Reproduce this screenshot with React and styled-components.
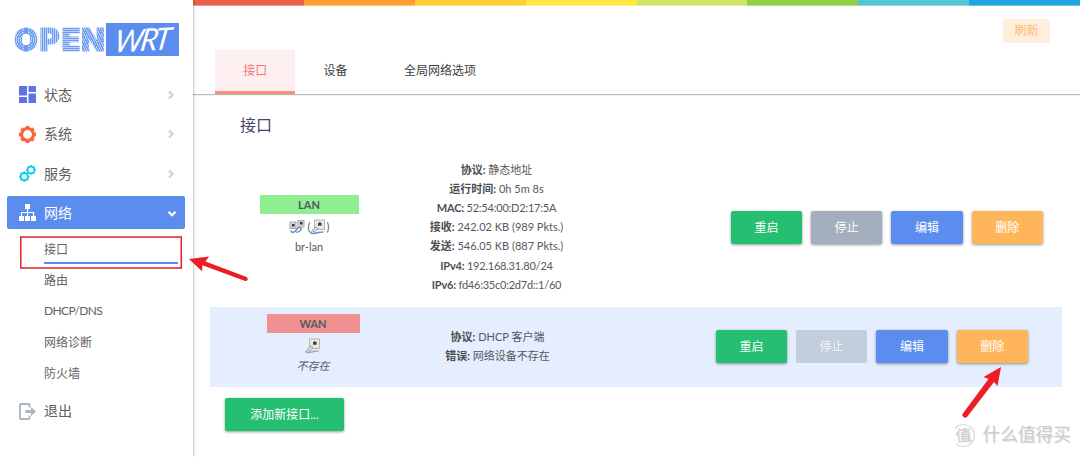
import styled, { createGlobalStyle } from "styled-components";

const GlobalStyle = createGlobalStyle`
  * {
    box-sizing: border-box;
  }

  body {
    margin: 0;
    background: #fff;
    color: #55595e;
    font-family: Lato, "Noto Sans CJK SC", sans-serif;
    overflow: hidden;
  }
`;

const Page = styled.div`
  position: relative;
  display: flex;
  width: 1080px;
  height: 457px;
  overflow: hidden;
`;

const Sidebar = styled.aside`
  display: flex;
  flex-direction: column;
  width: 193px;
  flex-shrink: 0;
  padding: 23px 8px 0 7px;
  z-index: 1;
  box-shadow: 0 0 3px rgba(0, 0, 0, 0.4);
`;

const Logo = styled.div`
  display: flex;
  align-items: center;
  height: 32px;
  margin: 0 0 20px 7px;
`;

const LogoLetter = styled.span`
  width: ${(p) => p.$width}px;
  height: 32px;
  font-family: Inter, sans-serif;
  font-size: 31px;
  line-height: 33px;
  font-weight: 900;
  letter-spacing: -1px;
  color: transparent;
  -webkit-text-stroke: 1px transparent;
  background: ${(p) => p.$fill};
  background-clip: text;
  -webkit-background-clip: text;
`;

const LogoBox = styled.div`
  display: flex;
  justify-content: center;
  width: 73px;
  height: 33px;
  margin-left: auto;
  margin-right: 6px;
  background: #5b8def;
  color: #fff;
  font-family: Lato, sans-serif;
  font-style: italic;
  font-size: 31px;
  line-height: 32px;
  letter-spacing: -2.5px;

  span {
    transform: skewX(-12deg) rotate(-3deg) scaleX(0.95);
  }
`;

const MenuItem = styled.a`
  display: flex;
  align-items: center;
  height: ${(p) => (p.$active ? 33 : 39.5)}px;
  margin-top: ${(p) => (p.$active ? 2.5 : 0)}px;
  padding: 0 8px 0 12px;
  width: 178px;
  border-radius: 2px;
  font-size: 14px;
  color: ${(p) => (p.$active ? "#fff" : "#5a5e63")};
  background: ${(p) => (p.$active ? "#5b8def" : "transparent")};

  .label {
    flex: 1;
    margin-left: 8px;
    padding-bottom: 2px;
  }
`;

const SubMenu = styled.ul`
  list-style: none;
  margin: 5px 0 2.5px;
  padding: 0 0 0 37px;
  font-size: 12px;
  color: #5f6368;
`;

const SubItem = styled.li`
  display: flex;
  align-items: center;
  width: 134px;
  height: 31px;
  letter-spacing: ${(p) => p.$spacing || 0}px;
  border-bottom: 2px solid ${(p) => (p.$active ? "#5b8def" : "transparent")};

  &:first-child {
    height: 30px;
    margin-bottom: 1px;
  }
`;

const Main = styled.main`
  flex: 1;
  display: flex;
  flex-direction: column;
`;

const Rainbow = styled.div`
  display: flex;
  height: 6px;
  flex-shrink: 0;
`;

const Stripe = styled.i`
  flex: 1;
  background: ${(p) => p.$color};
  box-shadow: inset 0 -1px rgba(255, 255, 255, 0.35);
`;

const Header = styled.div`
  display: flex;
  justify-content: flex-end;
  height: 44px;
  padding: 13px 30px 0 0;
`;

const Refresh = styled.span`
  width: 47px;
  height: 24px;
  border-radius: 3px;
  background: #ffeedb;
  color: #ffb976;
  font-size: 12px;
  line-height: 23px;
  text-align: center;
`;

const Tabs = styled.nav`
  display: flex;
  height: 44px;
  padding-left: 22px;
  box-shadow: 0 1px 1px rgba(0, 0, 0, 0.28);
  clip-path: inset(0 0 -4px 0);
`;

const Tab = styled.a`
  height: 44px;
  padding: 0 28.2px;
  font-size: 12px;
  line-height: 42px;
  color: ${(p) => (p.$active ? "#f5777c" : "#404040")};
  background: ${(p) => (p.$active ? "#fdefef" : "transparent")};
  border-bottom: 3px solid ${(p) => (p.$active ? "#fb9080" : "transparent")};
`;

const Title = styled.h3`
  margin: 18px 0 0 47px;
  font-size: 16px;
  line-height: 26px;
  font-weight: 400;
  color: #45456e;
`;

const Row = styled.section`
  display: flex;
  align-items: flex-start;
  width: 852px;
  height: ${(p) => p.$height}px;
  margin-left: 17px;
  padding-left: ${(p) => p.$left}px;
  padding-right: ${(p) => p.$right}px;
  background: ${(p) => (p.$tinted ? "#e5eefe" : "transparent")};
`;

const Zone = styled.div`
  width: ${(p) => p.$width}px;
  margin-top: ${(p) => p.$top}px;
  text-align: center;
  font-size: 11px;

  .name {
    height: 19px;
    line-height: 20px;
    font-weight: 700;
    background: ${(p) => p.$color};
  }

  .ports {
    display: flex;
    justify-content: center;
    align-items: center;
    height: 25px;
  }

  .device {
    line-height: 16px;
    font-style: ${(p) => (p.$missing ? "italic" : "normal")};
  }
`;

const Details = styled.div`
  width: 190px;
  margin-left: 43px;
  margin-top: ${(p) => p.$top}px;
  text-align: center;
  font-size: 11px;
  line-height: 19.2px;
  white-space: nowrap;

  b {
    color: #4b4f54;
  }
`;

const DetailLine = styled.div`
  letter-spacing: ${(p) => (p.$tight ? -0.22 : 0)}px;
`;

const Actions = styled.div`
  display: flex;
  gap: 9px;
  margin-left: auto;
  margin-top: ${(p) => p.$top}px;
`;

const Button = styled.button`
  width: ${(p) => p.$width || 71.3}px;
  height: 33px;
  border: 0;
  padding: 0 0 2px;
  border-radius: 2px;
  font-family: inherit;
  font-size: 12px;
  color: #fff;
  background: ${(p) => p.$color};
  opacity: ${(p) => (p.disabled ? 0.5 : 1)};
  box-shadow: ${(p) => (p.disabled ? "none" : "0 1px 3px rgba(0, 0, 0, 0.4)")};
`;

const Footer = styled.div`
  padding: 11px 0 0 32px;
`;

const Overlay = styled.svg`
  position: absolute;
  inset: 0;
  z-index: 2;
`;

const Watermark = styled.div`
  position: absolute;
  right: 9px;
  bottom: 10px;
  display: flex;
  align-items: center;
  gap: 8px;
  font-size: 17.7px;
  line-height: 24px;
  color: #ccc;
  text-shadow: 1px 1px 1px #e4e4e4;

  .badge {
    width: 23px;
    height: 23px;
    border: 1.5px solid #d4d4d4;
    border-left-color: transparent;
    border-radius: 50%;
    font-size: 16px;
    line-height: 19px;
    text-align: center;
    transform: rotate(-6deg);
  }
`;

const stripes = (angle) =>
  `repeating-linear-gradient(${angle}deg, #6d9af1 0 1.2px, #bdd2fa 1.2px 2px)`;

const logoLetters = [
  {
    char: "O",
    width: 25.5,
    fill: "repeating-radial-gradient(circle at 12px 16.5px, #6d9af1 0 1.2px, #bdd2fa 1.2px 2px)",
  },
  { char: "P", width: 22, fill: stripes(90) },
  { char: "E", width: 19.5, fill: stripes(0) },
  { char: "N", width: 24, fill: stripes(65) },
];

const rainbow = [
  "#e7604a",
  "#ff9f33",
  "#ffcf3b",
  "#ffe83f",
  "#cfe46a",
  "#8fd149",
  "#55c4d3",
  "#1ea5df",
];

const subItems = [
  { label: "接口", active: true },
  { label: "路由" },
  { label: "DHCP/DNS", spacing: -0.62 },
  { label: "网络诊断" },
  { label: "防火墙" },
];

const DashboardIcon = () => (
  <svg width="17" height="17" viewBox="0 0 17 17" fill="#5e72e4">
    <path d="M0 0h8v9.500H0zM0 11h8v6H0zM9.500 0H17v6H9.500zM9.500 7.500H17V17H9.500z" />
  </svg>
);

const gearTeeth = [0, 45, 90, 135, 180, 225, 270, 315];

const Gear = ({ cx, cy, scale, color }) => (
  <g transform={`translate(${cx} ${cy}) scale(${scale})`}>
    <circle r="5.900" fill="none" stroke={color} strokeWidth="3" />
    {gearTeeth.map((a) => (
      <rect
        key={a}
        x="-1.800"
        y="-8.500"
        width="3.600"
        height="2.800"
        fill={color}
        transform={`rotate(${a})`}
      />
    ))}
  </g>
);

const SystemIcon = () => (
  <svg width="17" height="17" viewBox="0 0 17 17">
    <Gear cx={8.5} cy={8.5} scale={1} color="#fb6340" />
  </svg>
);

const ServicesIcon = () => (
  <svg width="17" height="17" viewBox="0 0 17 17">
    <Gear cx={5.3} cy={11.6} scale={0.61} color="#11cdef" />
    <Gear cx={12} cy={4.9} scale={0.57} color="#11cdef" />
  </svg>
);

const NetworkIcon = () => (
  <svg width="17" height="17" viewBox="0 0 17 17" fill="#fff">
    <path d="M6 0h5v5H6zM0 12h5v5H0zM6 12h5v5H6zM12 12h5v5h-5z" />
    <path d="M8.500 5v7M2.500 12V8.500h12V12" fill="none" stroke="#fff" strokeWidth="1.200" />
  </svg>
);

const LogoutIcon = () => (
  <svg width="17" height="17" viewBox="0 0 17 17">
    <path
      d="M10.500 4.500V1.800Q10.500 1 9.700 1H1.800Q1 1 1 1.800v13.400q0 .8.8.8h7.900q.8 0 .8-.8v-2.700"
      fill="none"
      stroke="#adb5bd"
      strokeWidth="1.800"
    />
    <path d="M6.500 7H12V4l5 4.500-5 4.500v-3H6.500z" fill="#adb5bd" />
  </svg>
);

const Chevron = ({ open }) => (
  <svg width="10" height="10" viewBox="0 0 10 10">
    <path
      d={open ? "M1.500 3.800L5 7.200l3.500-3.400" : "M2 1.500L5.500 5 2 8.500"}
      fill="none"
      stroke={open ? "#fff" : "#ced4da"}
      strokeWidth="2.300"
    />
  </svg>
);

// network socket with the blue cable in front of it
const PortIcon = ({ down }) => (
  <svg width="16" height="16" viewBox="0 0 16 16">
    <rect x="4.500" y="1" width="10" height="9.500" fill="#e9e9e4" stroke="#b7b7b2" />
    <path d="M8 4h1V3.200h1.600V4h1v2.700H8z" fill="#444" />
    <path d="M2 11.500l4-3.500 2 1.500-3.500 3.500z" fill="#ddd" stroke="#8e8e8e" strokeWidth=".8" />
    <path
      d="M2 12.500q-2 2 1 2c3 0 5-1.500 10.500-1.500"
      fill="none"
      stroke={down ? "#a5a9ae" : "#6f92cc"}
      strokeWidth="1.700"
    />
  </svg>
);

const BridgeIcon = () => (
  <svg width="16" height="16" viewBox="0 0 16 16">
    <rect x="1" y="3" width="6" height="6.500" fill="#d8d8d3" stroke="#aaa" />
    <rect x="9" y="1.500" width="6" height="6.500" fill="#d8d8d3" stroke="#aaa" />
    <path d="M3 5h2.500v2.500H3zM11 3h2.500v2.500H11z" fill="#333" />
    <path
      d="M2 11.500q0 2.500 3 1.500c3-1 2-5 5.500-4.500 3.500.5 1 4-3 5"
      fill="none"
      stroke="#6f8fc4"
      strokeWidth="1.600"
    />
  </svg>
);

const RowActions = ({ top, stopDisabled }) => (
  <Actions $top={top}>
    <Button $color="#24bf70">重启</Button>
    <Button $color="#a3afbe" disabled={stopDisabled}>
      停止
    </Button>
    <Button $color="#5b8def">编辑</Button>
    <Button $color="#ffb65a">删除</Button>
  </Actions>
);

const lanDetails = [
  ["协议", "静态地址"],
  ["运行时间", "0h 5m 8s"],
  ["MAC", "52:54:00:D2:17:5A", true],
  ["接收", "242.02 KB (989 Pkts.)"],
  ["发送", "546.05 KB (887 Pkts.)"],
  ["IPv4", "192.168.31.80/24", true],
  ["IPv6", "fd46:35c0:2d7d::1/60", true],
];

const wanDetails = [
  ["协议", "DHCP 客户端"],
  ["错误", "网络设备不存在"],
];

const DetailList = ({ items, top }) => (
  <Details $top={top}>
    {items.map(([key, value, tight]) => (
      <DetailLine key={key} $tight={tight}>
        <b>{key}:</b> {value}
      </DetailLine>
    ))}
  </Details>
);

export default function App() {
  return (
    <>
      <GlobalStyle />
      <Page>
        <Sidebar>
          <Logo>
            {logoLetters.map((l) => (
              <LogoLetter key={l.char} $width={l.width} $fill={l.fill}>
                {l.char}
              </LogoLetter>
            ))}
            <LogoBox>
              <span>WRT</span>
            </LogoBox>
          </Logo>
          <MenuItem>
            <DashboardIcon />
            <span className="label">状态</span>
            <Chevron />
          </MenuItem>
          <MenuItem>
            <SystemIcon />
            <span className="label">系统</span>
            <Chevron />
          </MenuItem>
          <MenuItem>
            <ServicesIcon />
            <span className="label">服务</span>
            <Chevron />
          </MenuItem>
          <MenuItem $active>
            <NetworkIcon />
            <span className="label">网络</span>
            <Chevron open />
          </MenuItem>
          <SubMenu>
            {subItems.map((item) => (
              <SubItem
                key={item.label}
                $active={item.active}
                $spacing={item.spacing}
              >
                {item.label}
              </SubItem>
            ))}
          </SubMenu>
          <MenuItem>
            <LogoutIcon />
            <span className="label">退出</span>
          </MenuItem>
        </Sidebar>

        <Main>
          <Rainbow>
            {rainbow.map((color) => (
              <Stripe key={color} $color={color} />
            ))}
          </Rainbow>
          <Header>
            <Refresh>刷新</Refresh>
          </Header>
          <Tabs>
            <Tab $active>接口</Tab>
            <Tab>设备</Tab>
            <Tab>全局网络选项</Tab>
          </Tabs>
          <Title>接口</Title>

          <Row $height={169} $left={49.5} $right={19}>
            <Zone $width={99} $top={57} $color="#90ee90">
              <div className="name">LAN</div>
              <div className="ports">
                <BridgeIcon />
                &nbsp;(<PortIcon />)
              </div>
              <div className="device">br-lan</div>
            </Zone>
            <DetailList items={lanDetails} top={21.5} />
            <RowActions top={73} />
          </Row>
          <Row $tinted $height={79.5} $left={56.5} $right={34}>
            <Zone $width={93} $top={7} $color="#f09090" $missing>
              <div className="name">WAN</div>
              <div className="ports">
                <PortIcon down />
              </div>
              <div className="device">不存在</div>
            </Zone>
            <DetailList items={wanDetails} top={19.5} />
            <RowActions top={23} stopDisabled />
          </Row>
          <Footer>
            <Button $color="#24bf70" $width={119}>
              添加新接口...
            </Button>
          </Footer>
        </Main>

        <Overlay width="1080" height="457" fill="#ee1c24">
          <rect x="20.800" y="237" width="160.500" height="31" fill="none" stroke="#e2202a" strokeWidth="1.500" />
          <path d="M189 259l20-2.500-3.500 5 41 15.500q2 1.500 1 3t-3 .700l-42-15.500-.500 6z" />
          <path d="M1001 367l-3.500 19-3.500-4-27 35q-1.500 1.500-3.500 0t-1-3l26-35-5-2z" />
        </Overlay>
        <Watermark>
          <span className="badge">值</span>
          <span>什么值得买</span>
        </Watermark>
      </Page>
    </>
  );
}
